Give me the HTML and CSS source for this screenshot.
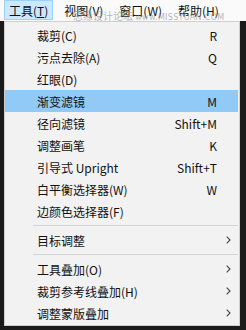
FILE: index.html
```html
<!DOCTYPE html>
<html lang="zh-CN">
<head>
    <meta charset="UTF-8">
    <meta name="viewport" content="width=device-width, initial-scale=1.0">
    <title>工具菜单</title>
    <link rel="stylesheet" href="styles.css">
</head>
<body>
    <div class="menubar">
        <div class="top-item active">工具(<u>T</u>)</div>
        <div class="top-item">视图(V)</div>
        <div class="top-item">窗口(W)</div>
        <div class="top-item">帮助(H)</div>
        <div class="watermark">思缘设计论坛 <span class="wm-url">www.MISSYUAN.COM</span></div>
    </div>

    <div class="dropdown">
        <div class="row"><span class="label">裁剪(C)</span><span class="key">R</span><span class="sub"></span></div>
        <div class="row"><span class="label">污点去除(A)</span><span class="key">Q</span><span class="sub"></span></div>
        <div class="row"><span class="label">红眼(D)</span><span class="key"></span><span class="sub"></span></div>
        <div class="row hover"><span class="label">渐变滤镜</span><span class="key">M</span><span class="sub"></span></div>
        <div class="row"><span class="label">径向滤镜</span><span class="key">Shift+M</span><span class="sub"></span></div>
        <div class="row"><span class="label">调整画笔</span><span class="key">K</span><span class="sub"></span></div>
        <div class="row"><span class="label">引导式 Upright</span><span class="key">Shift+T</span><span class="sub"></span></div>
        <div class="row"><span class="label">白平衡选择器(W)</span><span class="key">W</span><span class="sub"></span></div>
        <div class="row"><span class="label">边颜色选择器(F)</span><span class="key"></span><span class="sub"></span></div>

        <div class="sep"></div>

        <div class="row"><span class="label">目标调整</span><span class="key"></span><span class="sub"><svg width="5" height="8" viewBox="0 0 5 8"><polyline points="0.7,0.7 4,4 0.7,7.3" fill="none" stroke="#444" stroke-width="1.1"/></svg></span></div>

        <div class="sep"></div>

        <div class="row"><span class="label">工具叠加(O)</span><span class="key"></span><span class="sub"><svg width="5" height="8" viewBox="0 0 5 8"><polyline points="0.7,0.7 4,4 0.7,7.3" fill="none" stroke="#444" stroke-width="1.1"/></svg></span></div>
        <div class="row"><span class="label">裁剪参考线叠加(H)</span><span class="key"></span><span class="sub"><svg width="5" height="8" viewBox="0 0 5 8"><polyline points="0.7,0.7 4,4 0.7,7.3" fill="none" stroke="#444" stroke-width="1.1"/></svg></span></div>
        <div class="row"><span class="label">调整蒙版叠加</span><span class="key"></span><span class="sub"><svg width="5" height="8" viewBox="0 0 5 8"><polyline points="0.7,0.7 4,4 0.7,7.3" fill="none" stroke="#444" stroke-width="1.1"/></svg></span></div>
    </div>
</body>
</html>
```

FILE: styles.css
```css
body {
    margin: 0;
    width: 246px;
    height: 330px;
    overflow: hidden;
    background-color: #1b1b1b;
    font-family: "Noto Sans CJK SC", sans-serif;
    font-size: 12px;
    color: #111;
}
.menubar {
    position: relative;
    height: 21px;
    background-color: #fafafa;
    display: flex;
    align-items: flex-start;
    padding-left: 4px;
    gap: 6px;
}
.top-item {
    height: 20px;
    box-sizing: border-box;
    padding: 0 4px;
    line-height: 19px;
    border: 1px solid transparent;
}
.top-item.active {
    background-color: #cce8ff;
    border-color: #99d1ff;
}
.watermark {
    position: absolute;
    left: 73px;
    top: 10px;
    font-size: 10px;
    line-height: 11px;
    color: rgba(150, 150, 150, 0.7);
    white-space: nowrap;
}
.wm-url {
    font-family: "DejaVu Sans", sans-serif;
    font-size: 8px;
    letter-spacing: 0.3px;
}
.dropdown {
    margin-left: 4px;
    width: 236px;
    height: 305px;
    box-sizing: border-box;
    background-color: #f2f2f2;
    border: 1px solid #cfcfcf;
    padding: 2px 1px 1px 0;
}
.row {
    height: 22px;
    display: flex;
    align-items: center;
    padding-left: 32px;
}
.row.hover {
    background-color: #91c9f7;
}
.label {
    flex: 1;
    white-space: nowrap;
}
.key {
    white-space: nowrap;
}
.sub {
    width: 19px;
    display: flex;
    justify-content: center;
    padding-left: 2px;
}
.sep {
    height: 1px;
    margin: 3px 0 3px 28px;
    background-color: #d5d5d5;
}
```
